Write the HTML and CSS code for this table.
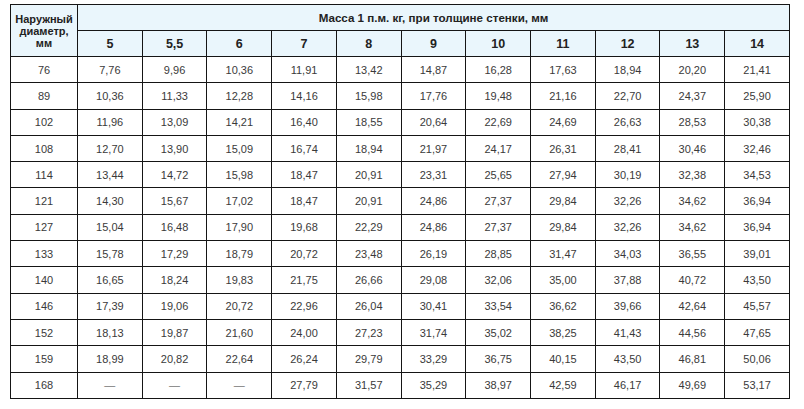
FILE: index.html
```html
<!DOCTYPE html>
<html lang="ru">
<head>
<meta charset="utf-8">
<link rel="stylesheet" href="styles.css">
</head>
<body>
<table class="mass">
  <colgroup>
    <col class="c-first">
    <col><col><col><col><col><col><col><col><col><col><col>
  </colgroup>
  <thead>
    <tr class="h1">
      <th rowspan="2" class="diam">Наружный диаметр, мм</th>
      <th colspan="11" class="title">Масса 1 п.м. кг, при толщине стенки, мм</th>
    </tr>
    <tr class="h2">
      <th>5</th><th>5,5</th><th>6</th><th>7</th><th>8</th><th>9</th><th>10</th><th>11</th><th>12</th><th>13</th><th>14</th>
    </tr>
  </thead>
  <tbody>
    <tr><td>76</td><td>7,76</td><td>9,96</td><td>10,36</td><td>11,91</td><td>13,42</td><td>14,87</td><td>16,28</td><td>17,63</td><td>18,94</td><td>20,20</td><td>21,41</td></tr>
    <tr><td>89</td><td>10,36</td><td>11,33</td><td>12,28</td><td>14,16</td><td>15,98</td><td>17,76</td><td>19,48</td><td>21,16</td><td>22,70</td><td>24,37</td><td>25,90</td></tr>
    <tr><td>102</td><td>11,96</td><td>13,09</td><td>14,21</td><td>16,40</td><td>18,55</td><td>20,64</td><td>22,69</td><td>24,69</td><td>26,63</td><td>28,53</td><td>30,38</td></tr>
    <tr><td>108</td><td>12,70</td><td>13,90</td><td>15,09</td><td>16,74</td><td>18,94</td><td>21,97</td><td>24,17</td><td>26,31</td><td>28,41</td><td>30,46</td><td>32,46</td></tr>
    <tr><td>114</td><td>13,44</td><td>14,72</td><td>15,98</td><td>18,47</td><td>20,91</td><td>23,31</td><td>25,65</td><td>27,94</td><td>30,19</td><td>32,38</td><td>34,53</td></tr>
    <tr><td>121</td><td>14,30</td><td>15,67</td><td>17,02</td><td>18,47</td><td>20,91</td><td>24,86</td><td>27,37</td><td>29,84</td><td>32,26</td><td>34,62</td><td>36,94</td></tr>
    <tr><td>127</td><td>15,04</td><td>16,48</td><td>17,90</td><td>19,68</td><td>22,29</td><td>24,86</td><td>27,37</td><td>29,84</td><td>32,26</td><td>34,62</td><td>36,94</td></tr>
    <tr><td>133</td><td>15,78</td><td>17,29</td><td>18,79</td><td>20,72</td><td>23,48</td><td>26,19</td><td>28,85</td><td>31,47</td><td>34,03</td><td>36,55</td><td>39,01</td></tr>
    <tr><td>140</td><td>16,65</td><td>18,24</td><td>19,83</td><td>21,75</td><td>26,66</td><td>29,08</td><td>32,06</td><td>35,00</td><td>37,88</td><td>40,72</td><td>43,50</td></tr>
    <tr><td>146</td><td>17,39</td><td>19,06</td><td>20,72</td><td>22,96</td><td>26,04</td><td>30,41</td><td>33,54</td><td>36,62</td><td>39,66</td><td>42,64</td><td>45,57</td></tr>
    <tr><td>152</td><td>18,13</td><td>19,87</td><td>21,60</td><td>24,00</td><td>27,23</td><td>31,74</td><td>35,02</td><td>38,25</td><td>41,43</td><td>44,56</td><td>47,65</td></tr>
    <tr><td>159</td><td>18,99</td><td>20,82</td><td>22,64</td><td>26,24</td><td>29,79</td><td>33,29</td><td>36,75</td><td>40,15</td><td>43,50</td><td>46,81</td><td>50,06</td></tr>
    <tr><td>168</td><td class="dash">—</td><td class="dash">—</td><td class="dash">—</td><td>27,79</td><td>31,57</td><td>35,29</td><td>38,97</td><td>42,59</td><td>46,17</td><td>49,69</td><td>53,17</td></tr>
  </tbody>
</table>
</body>
</html>
```

FILE: styles.css
```css
html, body {
  margin: 0;
  padding: 0;
  background: #ffffff;
}

body {
  padding: 4px 0 0 10px;
  font-family: "Liberation Sans", Arial, sans-serif;
}

.mass {
  border-collapse: collapse;
  table-layout: fixed;
  width: 780px;
  border: 1px solid #151515;
}

.c-first {
  width: 67px;
}

.mass th,
.mass td {
  border: 1px solid #151515;
  padding: 0;
  text-align: center;
  vertical-align: middle;
}

.mass th {
  background: #eaf6fc;
  color: #222222;
  font-weight: bold;
}

.h1 th,
.h2 th {
  height: 25px;
}

.diam {
  font-size: 11px;
  line-height: 12px;
  padding: 0 4px;
}

.title {
  font-size: 11.6px;
}

.h2 th {
  font-size: 12.5px;
}

.mass td {
  height: 25.3px;
  font-size: 11px;
  color: #3a3a3a;
}

.mass td.dash {
  color: #777777;
}
```
